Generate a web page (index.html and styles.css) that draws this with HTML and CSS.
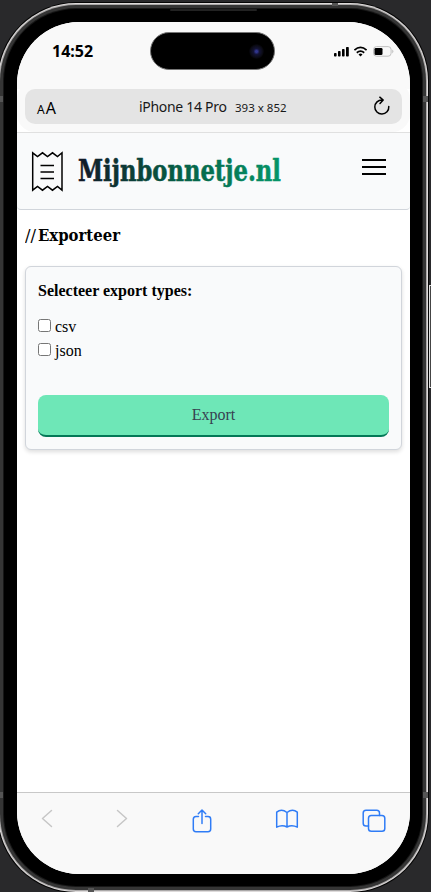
FILE: index.html
```html
<!DOCTYPE html>
<html lang="nl">
<head>
<meta charset="utf-8">
<title>Mijnbonnetje.nl</title>
<link rel="stylesheet" href="styles.css">
</head>
<body>
<div class="phone">
  <span class="speaker"></span>
  <span class="side-button"></span>
  <span class="antenna antenna-top"></span>
  <span class="antenna antenna-bottom"></span>
  <span class="antenna antenna-right-top"></span>
  <span class="antenna antenna-right-bottom"></span>
  <span class="antenna antenna-left-top"></span>
  <span class="antenna antenna-left-bottom"></span>
  <div class="screen">
    <div class="status">
      <span class="time">14:52</span>
      <div class="island"><span class="lens"></span></div>
      <svg class="indicators" width="62" height="14" viewBox="0 0 62 14">
        <g fill="#000"><rect x="0" y="8" width="2.6" height="3.5" rx=".8"/><rect x="4" y="6" width="2.6" height="5.5" rx=".8"/><rect x="8" y="4" width="2.6" height="7.5" rx=".8"/><rect x="12" y="2" width="2.8" height="9.5" rx=".8"/></g>
        <g fill="none" stroke="#000" stroke-width="1.8"><path d="M20.4 5.1Q26.5-.3 32.6 5.1"/><path d="M22.8 7.7Q26.5 4.5 30.2 7.7"/></g>
        <path d="M24.5 9.4Q26.5 7.8 28.5 9.4L26.5 11.6Z"/>
        <rect x="39.5" y="1.6" width="17.6" height="9.6" rx="3" fill="none" stroke="#c2c2c2"/>
        <rect x="40.5" y="3" width="8" height="7" rx="1.3"/>
        <path d="M58.2 4.6Q60.8 6.4 58.2 8.4Z" fill="#c2c2c2"/>
      </svg>
    </div>
    <div class="address">
      <span class="aa"><small>A</small>A</span>
      <span class="device">iPhone 14 Pro</span>
      <span class="size">393 x 852</span>
      <svg class="reload" width="18" height="20" viewBox="0 0 18 20" fill="none" stroke="#000" stroke-width="1.5" stroke-linecap="round" stroke-linejoin="round"><path d="M9.2 4A7 7 0 1 0 15.8 10.5M6.8 1.2L10.2 4 7 7.4"/></svg>
    </div>
    <header class="site-header">
      <svg class="receipt" width="34" height="42" viewBox="0 0 34 42" fill="none" stroke="#000" stroke-width="1.5"><path d="M1.7 1.8L6.5 5.6 11.5 1.8 16.5 5.6 21.5 1.8 26.5 5.6 31 1.8V39.2L26.5 35.5 21.5 39.2 16.5 35.5 11.5 39.2 6.5 35.5 1.7 39.2Z"/><path d="M9.5 14.5H23M9.5 21H23M9.5 27.5H23"/></svg>
      <svg class="brand" width="206" height="40" viewBox="0 0 206 40">
        <defs><linearGradient id="brand-fill" x1="0" x2="1"><stop offset="0" stop-color="#111827"/><stop offset=".5" stop-color="#065f46"/><stop offset="1" stop-color="#059669"/></linearGradient></defs>
        <text x="0" y="29" textLength="203" lengthAdjust="spacingAndGlyphs" fill="url(#brand-fill)" stroke="url(#brand-fill)" stroke-width=".5">Mijnbonnetje.nl</text>
      </svg>
      <div class="menu"><i></i><i></i><i></i></div>
    </header>
    <main>
      <h1><svg width="100" height="24" viewBox="0 0 100 24"><text class="slashes" x="0" y="16" textLength="11" lengthAdjust="spacingAndGlyphs">//</text><text x="13" y="16" textLength="82" lengthAdjust="spacingAndGlyphs">Exporteer</text></svg></h1>
      <form class="card">
        <h2>Selecteer export types:</h2>
        <label><input type="checkbox">csv</label>
        <label><input type="checkbox">json</label>
        <button type="button">Export</button>
      </form>
    </main>
    <nav class="toolbar">
      <svg width="12" height="20" viewBox="0 0 12 20" stroke="#c6c6c6" stroke-width="1.5"><path d="M10.5 1.5L1.5 9.5 10.5 17.5"/></svg>
      <svg width="12" height="20" viewBox="0 0 12 20" stroke="#c6c6c6" stroke-width="1.5"><path d="M1.5 1.5L10.5 9.5 1.5 17.5"/></svg>
      <svg width="20" height="25" viewBox="0 0 20 25"><path d="M6.5 7.5H4Q1.3 7.5 1.3 10.2V20Q1.3 22.7 4 22.7H16Q18.7 22.7 18.7 20V10.2Q18.7 7.5 16 7.5H13.5M10 14.5V1.1M6.3 4.7L10 1 13.7 4.7"/></svg>
      <svg width="24" height="22" viewBox="0 0 24 22"><path d="M12 3.5Q6.5-.8 1.7 3.2V18.2Q7 15.2 12 18Q17 15.2 22.3 18.2V3.2Q17.5-.8 12 3.5V18"/></svg>
      <svg width="24" height="24" viewBox="0 0 24 24"><path d="M6.5 17H4Q1.2 17 1.2 14.2V4Q1.2 1.2 4 1.2H14.7Q17.5 1.2 17.5 4V6.5"/><rect x="6.5" y="6.5" width="16.3" height="15.8" rx="2.8"/></svg>
    </nav>
  </div>
</div>
</body>
</html>
```
FILE: styles.css
```css
* { box-sizing: border-box; }
html, body { margin: 0; height: 892px; overflow: hidden; background: #29292b; }
body { padding: 9px 9px 6px 4px; font-family: "Liberation Serif", serif; color: #000; }
.phone {
  position: relative;
  width: 418px;
  height: 877px;
  padding: 13px 12px 12px 13px;
  background: #000;
  border-radius: 72px;
  box-shadow: 0 0 0 1px #171717, 0 0 0 4px #353535, 0 0 0 5px #aaa8a8, 0 0 0 6px #dddada, 0 0 0 7px #050505;
}
.speaker { position: absolute; top: 0; left: 166px; width: 87px; height: 2px; background: #222; border-radius: 2px; }
.side-button { position: absolute; left: 425px; top: 276px; width: 5px; height: 103px; background: #444; border: 1px solid #ddd; }
.antenna { position: absolute; background: #555; }
.antenna-top { left: 328px; top: -6px; width: 6px; height: 3px; }
.antenna-bottom { left: 84px; top: 879px; width: 6px; height: 4px; }
.antenna-right-top { left: 419px; top: 87px; width: 5px; height: 6px; }
.antenna-right-bottom { left: 419px; top: 783px; width: 5px; height: 6px; }
.antenna-left-top { left: -4px; top: 87px; width: 3px; height: 6px; }
.antenna-left-bottom { left: -4px; top: 783px; width: 3px; height: 6px; }
.screen { width: 393px; height: 852px; border-radius: 62px; overflow: hidden; background: #fff; display: flex; flex-direction: column; }
.status { height: 67px; flex: none; background: #f9f9f9; display: grid; grid-template-columns: 133px 125px 1fr; align-items: start; }
.time { font: 700 16px/22px "Noto Sans", sans-serif; padding: 18px 0 0 35px; }
.island { margin-top: 10px; height: 38px; border-radius: 19px; background: #000; border: 1px solid #777; display: flex; align-items: center; justify-content: flex-end; padding-right: 10px; }
.lens { width: 15px; height: 15px; border-radius: 50%; background: radial-gradient(circle, #30358c 0 1px, #131335 3px, #0b0b15 6px, #000 8px); }
.indicators { margin: 23px 0 0 59px; }
.address { flex: none; height: 35px; margin: 0 8px; border-radius: 10px; background: #e4e4e4; display: flex; align-items: center; font-family: "Noto Sans", sans-serif; color: #181818; box-shadow: 0 0 0 8px #f9f9f9; }
.aa { width: 102px; padding: 4px 0 0 12px; font-size: 16px; line-height: 20px; margin-right: 12px; color: #000; }
.aa small { font-size: 12px; margin-right: 1px; }
.device { font-size: 14px; width: 96px; letter-spacing: -.3px; white-space: nowrap; }
.size { font-size: 11.5px; padding-top: 2px; white-space: nowrap; }
.reload { margin: -1px 11px 0 auto; }
.site-header { flex: none; position: relative; margin-top: 8px; height: 78px; border-top: 1px solid #e0e0e0; border-bottom: 1px solid #d1d5db; border-radius: 0 0 4px 4px; background: #f9fafb; display: flex; align-items: flex-start; }
.receipt { margin: 17.5px 0 0 13.5px; }
.brand { margin: 19px 0 0 13px; overflow: visible; font: 700 29.5px "DejaVu Serif Condensed", "DejaVu Serif", serif; }
.menu { margin: 26px 0 0 auto; padding-right: 24px; display: grid; gap: 5px; }
.menu i { width: 24px; height: 2px; background: #000; }
main { flex: 1; padding: 0 8px; }
h1 { margin: 15px 0 0; height: 24px; font: 700 17.5px "DejaVu Serif Condensed", "DejaVu Serif", serif; }
h1 svg { display: block; }
.slashes { font-weight: 400; }
.card { margin-top: 17px; height: 184px; padding: 15px 12px 12px; border: 1px solid #d1d5db; border-radius: 6px; background: #f9fafb; box-shadow: 0 2px 4px #0002; display: flex; flex-direction: column; }
h2 { margin: 0 0 15px; font-size: 16px; line-height: 18px; }
label { display: flex; align-items: center; height: 24px; font-size: 16px; }
input { width: 13px; height: 13px; margin: 0 4px 3px 0; }
button { margin-top: auto; height: 42px; border: 0; border-bottom: 2px solid #047857; border-radius: 8px; background: #6ee7b7; color: #374151; font: 16px "Liberation Serif", serif; padding: 0; }
.toolbar { flex: none; height: 82px; padding: 16px 24px 0 24px; border-top: 1px solid #c8c8c8; background: #f9f9f9; display: flex; justify-content: space-between; align-items: flex-start; }
.toolbar svg { fill: none; stroke-linejoin: round; stroke-linecap: round; }
.toolbar svg:nth-child(n+3) { stroke: #2f7cf6; stroke-width: 1.5; }
```
